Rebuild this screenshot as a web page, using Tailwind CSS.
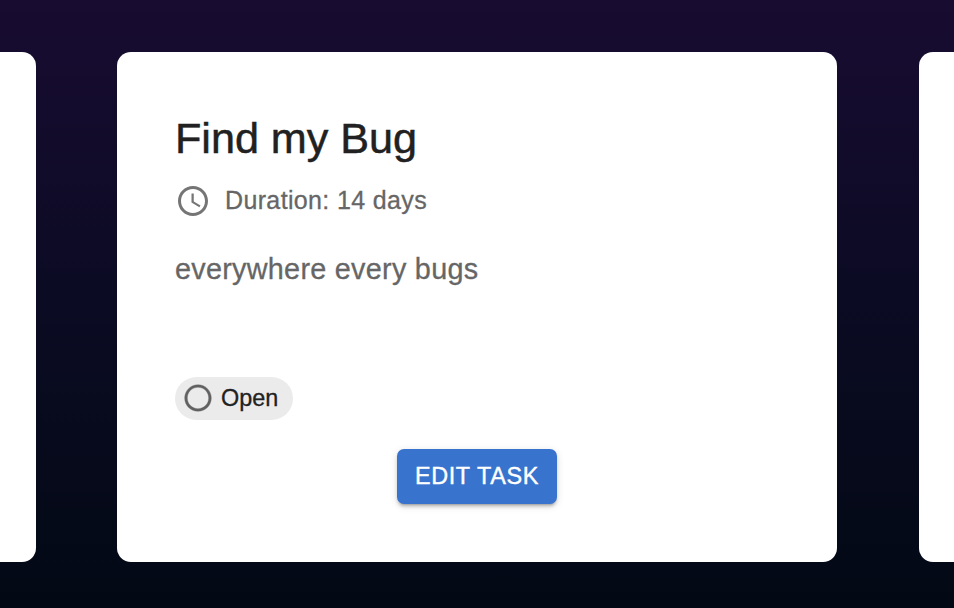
<!DOCTYPE html>
<html lang="en">
<head>
<meta charset="utf-8">
<title>Tasks</title>
<script src="https://cdn.jsdelivr.net/npm/@tailwindcss/browser@4"></script>
</head>
<body class="h-[608px] overflow-hidden bg-linear-[to_bottom,#180c31,#0b0b23_50%,#020914] font-['Liberation_Sans',Arial,sans-serif]">
<main class="flex h-[608px] w-[954px] items-start overflow-hidden pt-[52px]">
  <div class="h-[510px] w-9 shrink-0 rounded-r-[14px] bg-white"></div>
  <article class="ml-[81px] flex h-[510px] w-[720px] shrink-0 flex-col items-start rounded-[14px] bg-white px-[58px] pt-[57px]">
    <h1 class="h-[58px] whitespace-nowrap text-[43.2px] leading-[58px] tracking-[-0.03px] text-[#212121] [-webkit-text-stroke:0.5px_#212121]">Find my Bug</h1>
    <div class="mt-[15px] flex h-9 items-center text-[#666]">
      <svg class="mt-[2px] size-9 shrink-0 text-[#757575]" viewBox="0 0 24 24" fill="currentColor"><path d="M11.99 2C6.47 2 2 6.48 2 12s4.47 10 9.99 10C17.52 22 22 17.52 22 12S17.52 2 11.99 2zM12 20c-4.42 0-8-3.58-8-8s3.58-8 8-8 8 3.58 8 8-3.58 8-8 8zm.5-13H11v6l5.25 3.15.75-1.23-4.5-2.67z"/></svg>
      <p class="ml-[14px] whitespace-nowrap text-[25px] leading-9 tracking-[0.36px] [-webkit-text-stroke:0.3px_#666]">Duration: 14 days</p>
    </div>
    <p class="mt-[29px] h-11 whitespace-nowrap text-[28.8px] leading-11 tracking-[0.27px] text-[#666] [-webkit-text-stroke:0.3px_#666]">everywhere every bugs</p>
    <div class="mt-[86px] flex h-[43px] w-[118px] items-center rounded-full bg-[#ebebeb] pl-[7px] text-[#212121]">
      <svg class="mb-[1px] size-8 shrink-0 text-[#616161]" viewBox="0 0 24 24" fill="currentColor" stroke="currentColor" stroke-width="0.25"><path d="M12 2C6.48 2 2 6.48 2 12s4.48 10 10 10 10-4.48 10-10S17.52 2 12 2zm0 18c-4.42 0-8-3.58-8-8s3.58-8 8-8 8 3.58 8 8-3.58 8-8 8z"/></svg>
      <span class="ml-[7px] whitespace-nowrap text-[23.4px] [-webkit-text-stroke:0.3px_#212121]">Open</span>
    </div>
    <button class="mt-[29px] h-[55px] w-[160px] self-center whitespace-nowrap rounded-[7px] bg-[#3873ce] text-[23.4px] tracking-[0.65px] text-white [-webkit-text-stroke:0.4px_#fff] shadow-[0_4px_2px_-3px_rgba(0,0,0,0.2),0_3px_3px_rgba(0,0,0,0.14),0_2px_8px_rgba(0,0,0,0.12)]">EDIT TASK</button>
  </article>
  <div class="ml-[82px] h-[510px] w-[60px] shrink-0 rounded-l-[14px] bg-white"></div>
</main>
</body>
</html>
